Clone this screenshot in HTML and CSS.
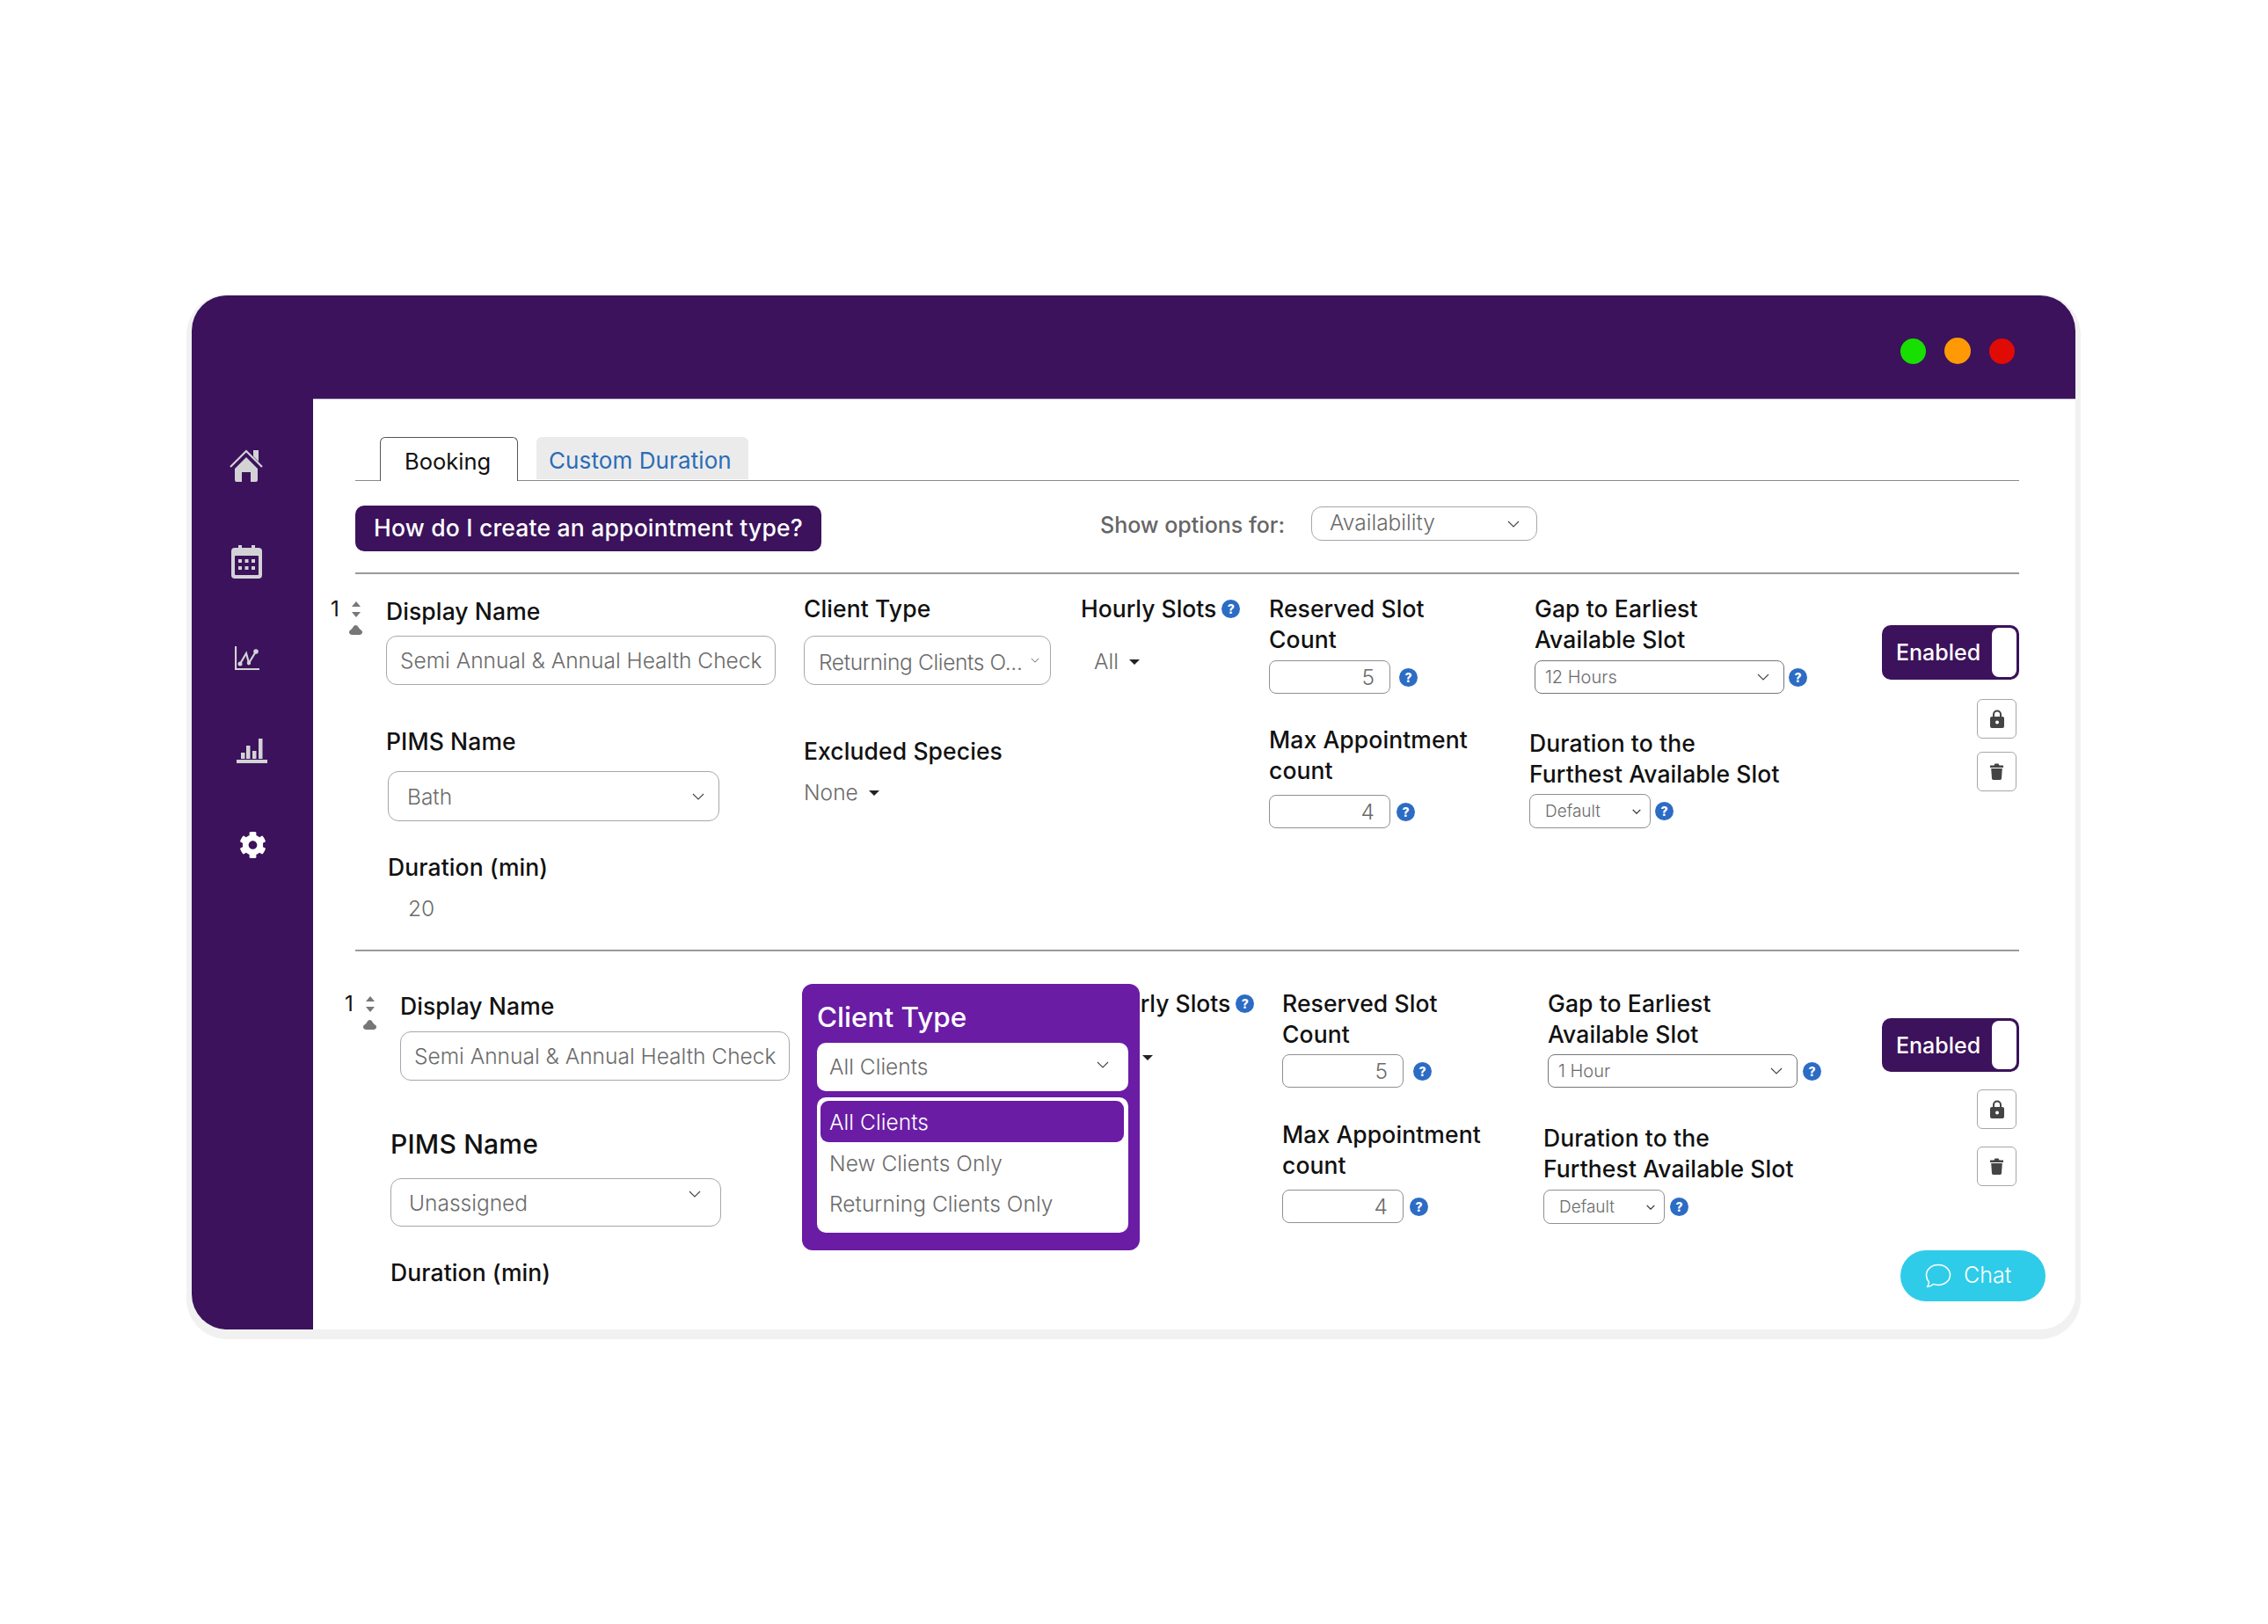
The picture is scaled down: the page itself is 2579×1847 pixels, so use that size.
FILE: index.html
```html
<!DOCTYPE html>
<html lang="en">
<head>
<meta charset="utf-8">
<title>Appointment types</title>
<link rel="stylesheet" href="styles.css">
</head>
<body>
<svg class="defs" width="0" height="0" aria-hidden="true">
  <defs>
    <symbol id="chev" viewBox="0 0 14 8"><polyline points="1,1 7,7 13,1" fill="none" stroke="#444" stroke-width="1.100"/></symbol>
    <symbol id="chev-s" viewBox="0 0 14 8"><polyline points="1,1 7,7 13,1" fill="none" stroke="#333" stroke-width="1.800"/></symbol>
    <symbol id="lock" viewBox="0 0 16 21"><path d="M4 9V5.500a4 4 0 0 1 8 0V9" fill="none" stroke="#444" stroke-width="2"/><path fill-rule="evenodd" d="M2 8h12a2 2 0 0 1 2 2v9a2 2 0 0 1-2 2H2a2 2 0 0 1-2-2v-9a2 2 0 0 1 2-2zm6 4.500a2 2 0 1 0 0 4 2 2 0 0 0 0-4z" fill="#444"/></symbol>
    <symbol id="trash" viewBox="0 0 15 19"><path d="M0 2.500h4.500L5.500 .5h4l1 2H15V5H0zM1.200 6h12.600l-.8 11.500a1.600 1.600 0 0 1-1.600 1.500H3.600A1.600 1.600 0 0 1 2 17.500z" fill="#444"/></symbol>
    <symbol id="cloud" viewBox="0 0 15 11"><path d="M3 11a3 3 0 0 1-2.400-4.800C2 5 3 4.500 4 3 5 1 6.200 0 7.500 0S10 1 11 3c1 1.500 2 2 3.400 3.200A3 3 0 0 1 12 11z" fill="#777"/></symbol>
  </defs>
</svg>
<main class="window">
  <header class="titlebar">
    <span class="dot dot-green"></span>
    <span class="dot dot-orange"></span>
    <span class="dot dot-red"></span>
  </header>
  <div class="body-wrap">
    <nav class="sidebar">
      <svg class="nav-home" width="38" height="37" viewBox="0 0 38 37"><path d="M1 20 19 2l18 18" fill="none" stroke="#d3d3d6" stroke-width="2.200"/><path d="M27 8V1h6v13z" fill="#d3d3d6"/><path d="M19 9 32 22v13a2 2 0 0 1-2 2h-6V26H14v11H8a2 2 0 0 1-2-2V22z" fill="#d3d3d6"/></svg>
      <svg class="nav-cal" width="35" height="38" viewBox="0 0 35 38"><rect y="3" width="35" height="35" rx="4" fill="#d3d3d6"/><rect x="8" width="4" height="6" fill="#d3d3d6"/><rect x="23" width="4" height="6" fill="#d3d3d6"/><rect x="4" y="12" width="27" height="22" rx="1" fill="#3b125b"/><g fill="#d3d3d6"><rect x="8" y="16" width="4" height="4"/><rect x="15.500" y="16" width="4" height="4"/><rect x="23" y="16" width="4" height="4"/><rect x="8" y="24" width="4" height="4"/><rect x="15.500" y="24" width="4" height="4"/><rect x="23" y="24" width="4" height="4"/></g></svg>
      <svg class="nav-line" width="28" height="27" viewBox="0 0 28 27"><path d="M1 0v26h27" fill="none" stroke="#d3d3d6" stroke-width="2.200"/><path d="M6 20 13 8l3 11 8-13" fill="none" stroke="#d3d3d6" stroke-width="2.200"/><circle cx="6" cy="20" r="2.500" fill="#d3d3d6"/><circle cx="16" cy="19" r="2.200" fill="#d3d3d6"/><circle cx="24" cy="6" r="2.800" fill="#d3d3d6"/></svg>
      <svg class="nav-bar" width="35" height="29" viewBox="0 0 35 29"><g fill="#d3d3d6"><rect x="5" y="17" width="4.500" height="7"/><rect x="11" y="9" width="4.500" height="15"/><rect x="18" y="15" width="4.500" height="9"/><rect x="25" y="1" width="4.500" height="23"/><rect y="25" width="35" height="4"/></g></svg>
      <svg class="nav-gear" width="31" height="32" viewBox="0 0 512 512"><path fill="#fff" d="M487.400 315.700l-42.600-24.600c4.300-23.200 4.300-47 0-70.200l42.600-24.600c4.900-2.800 7.100-8.600 5.500-14-11.100-35.600-30-67.800-54.700-94.600-3.800-4.100-10-5.100-14.800-2.300L380.800 110c-17.900-15.400-38.500-27.300-60.800-35.100V25.800c0-5.600-3.900-10.500-9.400-11.700-36.700-8.200-74.300-7.800-109.200 0-5.500 1.200-9.400 6.100-9.400 11.700V75c-22.200 7.900-42.800 19.800-60.800 35.100L88.700 85.500c-4.900-2.800-11-1.900-14.800 2.300-24.700 26.700-43.600 58.900-54.700 94.600-1.700 5.400.6 11.200 5.500 14L67.300 221c-4.300 23.200-4.300 47 0 70.200l-42.600 24.600c-4.900 2.800-7.100 8.600-5.500 14 11.100 35.600 30 67.800 54.700 94.600 3.800 4.100 10 5.100 14.800 2.300l42.600-24.600c17.900 15.400 38.500 27.300 60.800 35.100v49.200c0 5.600 3.900 10.500 9.400 11.700 36.700 8.200 74.300 7.800 109.200 0 5.500-1.200 9.400-6.100 9.400-11.700v-49.200c22.200-7.900 42.800-19.800 60.800-35.100l42.600 24.600c4.900 2.800 11 1.900 14.800-2.300 24.700-26.700 43.600-58.900 54.700-94.600 1.500-5.500-.7-11.300-5.600-14.100zM256 336c-44.100 0-80-35.900-80-80s35.900-80 80-80 80 35.900 80 80-35.900 80-80 80z"/></svg>
    </nav>
    <section class="content">
      <div class="tabs">
        <div class="tab tab-active">Booking</div>
        <div class="tab tab-other">Custom Duration</div>
      </div>
      <div class="toolbar">
        <div class="howto">How do I create an appointment type?</div>
        <div class="show-label">Show options for:</div>
        <div class="field select sel-avail"><span>Availability</span><svg class="chev"><use href="#chev"/></svg></div>
      </div>
      <div class="divider divider-a"></div>

      <div class="row row-a">
        <div class="order">
          <span class="order-num">1</span>
          <div class="order-ctrl"><i class="tri-up"></i><i class="tri-down"></i><svg class="cloud"><use href="#cloud"/></svg></div>
        </div>
        <div class="col">
          <div class="label mt-25">Display Name</div>
          <div class="field w-name mt-10"><span>Semi Annual &amp; Annual Health Check</span></div>
          <div class="label mt-47">PIMS Name</div>
          <div class="field select w-pims mt-16 in-1"><span>Bath</span><svg class="chev"><use href="#chev"/></svg></div>
          <div class="label mt-35 in-1">Duration (min)</div>
          <div class="value mt-12 in-25">20</div>
        </div>
        <div class="col">
          <div class="label mt-22">Client Type</div>
          <div class="field select w-client mt-13"><span class="ell">Returning Clients O...</span><svg class="chev chev-sm"><use href="#chev"/></svg></div>
          <div class="label mt-58">Excluded Species</div>
          <div class="dropdown mt-12"><span>None</span><i class="caret"></i></div>
        </div>
        <div class="col">
          <div class="label label-help mt-22 out-1">Hourly Slots<b class="help">?</b></div>
          <div class="dropdown mt-25 in-14"><span>All</span><i class="caret"></i></div>
        </div>
        <div class="col">
          <div class="label lines mt-22">Reserved Slot<br>Count</div>
          <div class="with-help mt-6 gap-10"><div class="field num"><span>5</span></div><b class="help">?</b></div>
          <div class="label lines mt-35">Max Appointment<br>count</div>
          <div class="with-help mt-10 gap-7"><div class="field num"><span>4</span></div><b class="help">?</b></div>
        </div>
        <div class="col">
          <div class="label lines mt-22">Gap to Earliest<br>Available Slot</div>
          <div class="with-help mt-6 gap-5"><div class="field select small w-gap"><span>12 Hours</span><svg class="chev"><use href="#chev"/></svg></div><b class="help">?</b></div>
          <div class="label lines mt-39 out-6">Duration to the<br>Furthest Available Slot</div>
          <div class="with-help mt-5 gap-5 out-6"><div class="field select tiny w-def"><span>Default</span><svg class="chev chev-sm"><use href="#chev-s"/></svg></div><b class="help">?</b></div>
        </div>
        <div class="col col-end">
          <div class="toggle mt-58"><span>Enabled</span><i class="knob"></i></div>
          <div class="icon-btn mt-22"><svg class="ico-lock"><use href="#lock"/></svg></div>
          <div class="icon-btn mt-15"><svg class="ico-trash"><use href="#trash"/></svg></div>
        </div>
      </div>
      <div class="divider"></div>

      <div class="row row-b">
        <div class="order order-b">
          <span class="order-num">1</span>
          <div class="order-ctrl"><i class="tri-up"></i><i class="tri-down"></i><svg class="cloud"><use href="#cloud"/></svg></div>
        </div>
        <div class="col">
          <div class="label mt-45">Display Name</div>
          <div class="field w-name mt-11"><span>Semi Annual &amp; Annual Health Check</span></div>
          <div class="label label-lg mt-52 out-11">PIMS Name</div>
          <div class="field select w-pims-b mt-19 out-11 sel-top"><span>Unassigned</span><svg class="chev"><use href="#chev"/></svg></div>
          <div class="label mt-35 out-11">Duration (min)</div>
        </div>
        <div class="col col-pop">
          <div class="popover">
            <div class="pop-title">Client Type</div>
            <div class="pop-select"><span>All Clients</span><svg class="chev"><use href="#chev"/></svg></div>
            <ul class="pop-list">
              <li class="pop-on">All Clients</li>
              <li>New Clients Only</li>
              <li>Returning Clients Only</li>
            </ul>
          </div>
        </div>
        <div class="col">
          <div class="label label-help mt-42">Hourly Slots<b class="help">?</b></div>
          <div class="dropdown mt-26 in-14"><span>All</span><i class="caret"></i></div>
        </div>
        <div class="col">
          <div class="label lines mt-42">Reserved Slot<br>Count</div>
          <div class="with-help mt-5 gap-11"><div class="field num"><span>5</span></div><b class="help">?</b></div>
          <div class="label lines mt-36">Max Appointment<br>count</div>
          <div class="with-help mt-10 gap-7"><div class="field num"><span>4</span></div><b class="help">?</b></div>
        </div>
        <div class="col">
          <div class="label lines mt-42">Gap to Earliest<br>Available Slot</div>
          <div class="with-help mt-5 gap-6"><div class="field select small w-gap"><span>1 Hour</span><svg class="chev"><use href="#chev"/></svg></div><b class="help">?</b></div>
          <div class="label lines mt-40 out-5">Duration to the<br>Furthest Available Slot</div>
          <div class="with-help mt-6 gap-6 out-5"><div class="field select tiny w-def"><span>Default</span><svg class="chev chev-sm"><use href="#chev-s"/></svg></div><b class="help">?</b></div>
        </div>
        <div class="col col-end">
          <div class="toggle toggle-b mt-76"><span>Enabled</span><i class="knob"></i></div>
          <div class="icon-btn mt-20"><svg class="ico-lock"><use href="#lock"/></svg></div>
          <div class="icon-btn mt-20"><svg class="ico-trash"><use href="#trash"/></svg></div>
        </div>
      </div>
    </section>
  </div>
  <div class="chat">
    <svg width="30" height="28" viewBox="0 0 30 28"><path d="M15 1.500c7.500 0 13.500 5 13.500 11.500S22.500 24.500 15 24.500c-2 0-4-.4-5.600-1.100-1.600 1.700-4 3-6.900 3.100 1.300-1.500 2-3.300 1.900-5.400C2.600 19 1.500 16 1.500 13 1.500 6.500 7.500 1.500 15 1.500z" fill="none" stroke="#fff" stroke-width="1.500" stroke-linejoin="round"/></svg>
    <span>Chat</span>
  </div>
</main>
</body>
</html>
```
FILE: styles.css
```css
* { box-sizing: border-box; }
html, body { margin: 0; padding: 0; background: #fff; }
body { height: 1847px; overflow: hidden; font-family: Inter, "Noto Sans", sans-serif; color: #111; }
.defs { position: absolute; }

.window {
  position: relative;
  margin: 336px 0 0 218px;
  width: 2142px;
  height: 1176px;
  border-radius: 40px;
  background: #fff;
  box-shadow: 0 5px 1px 6px #f1f1f1;
  overflow: hidden;
}
.titlebar {
  height: 117px;
  background: #3b125b;
  display: flex;
  justify-content: flex-end;
  align-items: flex-start;
  gap: 21px;
  padding: 49px 69px 0 0;
}
.dot { width: 29px; height: 29px; border-radius: 50%; }
.dot-green { background: #17e000; }
.dot-orange { background: #ff9a05; width: 30px; height: 30px; margin-top: -1px; }
.dot-red { background: #e00b05; }

.body-wrap { display: flex; height: 1059px; }
.sidebar {
  width: 138px;
  flex: none;
  background: #3b125b;
  padding: 58px 0 0 43px;
  display: flex;
  flex-direction: column;
  align-items: flex-start;
}
.nav-cal { margin: 72px 0 0 2px; }
.nav-line { margin: 77px 0 0 6px; }
.nav-bar { margin: 77px 0 0 8px; }
.nav-gear { margin: 77px 0 0 11px; }

.content { flex: 1; min-width: 0; padding: 44px 64px 0 48px; box-shadow: inset 0 1px #7c6a90; }

.tabs {
  display: flex;
  gap: 21px;
  height: 50px;
  padding-left: 28px;
  border-bottom: 1.500px solid #8a8a8a;
}
.tab {
  height: 50px;
  font-size: 26px;
  line-height: 53px;
  border-radius: 6px 6px 0 0;
  letter-spacing: 0.1px;
}
.tab-active { width: 157px; padding-left: 27px; font-size: 25.500px; letter-spacing: 0; background: #fff; border: 1.500px solid #555; border-bottom: 0; color: #111; }
.tab-other { width: 241px; padding-left: 14px; background: #ebebec; color: #2b6cb5; height: 48px; }

.toolbar { display: flex; align-items: flex-start; margin-top: 28px; }
.howto {
  width: 530px;
  height: 52px;
  background: #3b125b;
  border-radius: 10px;
  color: #fff;
  font-size: 26.500px;
  font-weight: 500;
  line-height: 50px;
  text-align: center;
  letter-spacing: 0.2px;
  white-space: nowrap;
}
.show-label { margin: 5px 0 0 317px; width: 240px; font-size: 25px; font-weight: 500; line-height: 35px; color: #666; }

.divider { height: 2px; background: #9a9a9a; }
.divider-a { margin-top: 24px; }

.row { display: grid; }
.row-a { grid-template-columns: 63px 475px 316px 213px 302px 395px 156px; margin-left: -28px; padding-bottom: 29px; }
.row-b { grid-template-columns: 60px 475px 315px 213px 302px 380px 156px; margin-left: -9px; }

.col { display: flex; flex-direction: column; align-items: flex-start; min-width: 0; }
.col-end { align-items: flex-end; padding-right: 3px; }
.col-pop { position: relative; }

.order { display: flex; align-items: flex-start; gap: 10px; padding-top: 22px; margin-left: -1px; }
.order-b { padding-top: 42px; gap: 10px; margin-left: -4px; }
.order-num { font-size: 24px; line-height: 36px; width: 12px; text-align: center; }
.order-ctrl { display: flex; flex-direction: column; align-items: center; width: 15px; padding-top: 9px; }
.tri-up { width: 0; height: 0; border: 5.500px solid transparent; border-top: 0; border-bottom: 6px solid #777; }
.tri-down { width: 0; height: 0; border: 5.500px solid transparent; border-bottom: 0; border-top: 6px solid #777; margin-top: 6px; }
.cloud { width: 15px; height: 11px; margin-top: 9px; }

.label { font-size: 26.500px; font-weight: 500; line-height: 35px; color: #111; letter-spacing: 0.1px; white-space: nowrap; }
.label-lg { font-size: 30px; line-height: 40px; letter-spacing: 0.2px; }
.label-help { display: flex; align-items: flex-start; gap: 6px; letter-spacing: 0; }
.label-help .help { margin-top: 7px; }

.field {
  display: flex;
  align-items: center;
  justify-content: space-between;
  border: 1.500px solid #a6a6ae;
  border-radius: 12px;
  background: #fff;
  color: #6b6b6b;
  font-size: 24.500px;
  font-weight: 300;
  white-space: nowrap;
  padding: 0 15px;
}
.select { padding-right: 12px; }
.sel-avail { width: 257px; height: 39px; margin-top: 1px; padding: 0 19px 0 20px; }
.sel-avail span { margin-top: -3px; }
.chev { width: 14px; height: 8px; flex: none; }
.chev-sm { width: 10px; height: 6px; }
.w-name { width: 443px; height: 56px; }
.w-pims { width: 377px; height: 57px; padding-left: 21px; padding-right: 16px; }
.w-pims-b { width: 376px; height: 55px; padding-left: 20px; padding-right: 22px; }
.sel-top .chev { margin-top: -20px; }
.w-client { width: 281px; height: 56px; padding-left: 16px; padding-right: 12px; }
.ell { padding-top: 3px; letter-spacing: -0.35px; }
.num { width: 138px; height: 38px; justify-content: flex-end; padding-right: 17px; border-radius: 8px; border-color: #8f8f96; }
.small { font-size: 20px; height: 38px; border-radius: 8px; border-color: #777; padding-left: 11px; padding-right: 16px; }
.tiny { font-size: 19px; height: 39px; border-radius: 8px; border-color: #8f8f96; padding-left: 17px; padding-right: 10px; }
.w-gap { width: 284px; }
.w-def { width: 138px; }

.value { font-size: 24.500px; font-weight: 300; line-height: 35px; color: #6b6b6b; }
.dropdown { display: flex; align-items: center; gap: 12px; font-size: 24.500px; font-weight: 300; line-height: 35px; color: #6b6b6b; }
.caret { width: 0; height: 0; border: 6.500px solid transparent; border-bottom: 0; border-top: 6.500px solid #222; }

.with-help { display: flex; align-items: center; }
.help {
  width: 21px;
  height: 21px;
  flex: none;
  border-radius: 50%;
  background: #2c6cc4;
  color: #fff;
  font-size: 14px;
  font-weight: 800;
  line-height: 21px;
  text-align: center;
  letter-spacing: 0;
}

.toggle {
  align-self: flex-end;
  margin-right: -3px;
  width: 156px;
  height: 62px;
  display: flex;
  align-items: center;
  justify-content: space-between;
  background: #3b125b;
  border-radius: 10px;
  padding: 3px 3px 3px 16px;
  color: #fff;
  font-size: 25px;
  font-weight: 500;
}
.toggle-b { height: 61px; }
.knob { width: 28px; height: 100%; background: #fff; border-radius: 8px; }
.icon-btn {
  width: 45px;
  height: 45px;
  display: flex;
  align-items: center;
  justify-content: center;
  border: 1.500px solid #a6a6ae;
  border-radius: 6px;
  background: #fff;
}
.ico-lock { width: 16px; height: 21px; }
.ico-trash { width: 15px; height: 19px; }

.mt-5 { margin-top: 5px; } .mt-6 { margin-top: 6px; } .mt-10 { margin-top: 10px; }
.mt-11 { margin-top: 11px; } .mt-12 { margin-top: 12px; } .mt-13 { margin-top: 13px; } .mt-15 { margin-top: 15px; }
.mt-16 { margin-top: 16px; } .mt-19 { margin-top: 19px; } .mt-20 { margin-top: 20px; } .mt-22 { margin-top: 22px; }
.mt-25 { margin-top: 25px; } .mt-26 { margin-top: 26px; } .mt-35 { margin-top: 35px; } .mt-36 { margin-top: 36px; }
.mt-39 { margin-top: 39px; } .mt-40 { margin-top: 40px; } .mt-42 { margin-top: 42px; }
.mt-45 { margin-top: 45px; } .mt-47 { margin-top: 47px; } .mt-52 { margin-top: 52px; } .mt-58 { margin-top: 58px; }
.mt-76 { margin-top: 76px; }
.in-1 { margin-left: 2px; } .in-14 { margin-left: 14px; } .in-25 { margin-left: 25px; }
.out-1 { margin-left: -1px; } .out-5 { margin-left: -5px; } .out-6 { margin-left: -6px; } .out-11 { margin-left: -11px; }
.gap-5 { gap: 5px; } .gap-6 { gap: 6px; } .gap-7 { gap: 7px; } .gap-10 { gap: 10px; } .gap-11 { gap: 11px; }

.popover {
  position: absolute;
  left: -18px;
  top: 37px;
  width: 384px;
  height: 303px;
  background: #6a1ca5;
  border-radius: 12px;
  padding: 18px 13px 0 17px;
}
.pop-title { color: #fff; font-size: 31.500px; font-weight: 500; line-height: 40px; }
.pop-select {
  margin-top: 9px;
  height: 55px;
  background: #fff;
  border-radius: 10px;
  display: flex;
  align-items: center;
  justify-content: space-between;
  padding: 0 22px 2px 14px;
  color: #6b6b6b;
  font-size: 24.500px;
  font-weight: 300;
}
.pop-select .chev { margin-top: -4px; }
.pop-list {
  list-style: none;
  margin: 7px 0 0;
  height: 154px;
  background: #fff;
  border-radius: 10px;
  padding: 4px 5px 0 4px;
  color: #6b6b6b;
  font-size: 24.500px;
  font-weight: 300;
  letter-spacing: 0.05px;
}
.pop-list li { height: 46px; line-height: 48px; padding-left: 10px; }
.pop-list li.pop-on { height: 47px; background: #6a1ca5; color: #fff; border-radius: 9px; }

.chat {
  position: absolute;
  right: 34px;
  bottom: 32px;
  width: 165px;
  height: 58px;
  border-radius: 29px;
  background: #2ecce8;
  display: flex;
  align-items: center;
  gap: 14px;
  padding-left: 28px;
  color: #fff;
  font-size: 25px;
  font-weight: 300;
}
.chat span { margin-top: -2px; }
```
